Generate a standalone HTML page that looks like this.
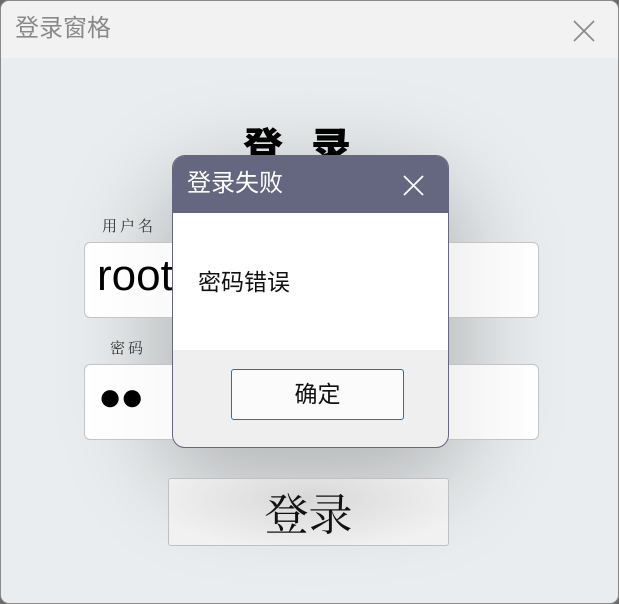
<!DOCTYPE html>
<html><head><meta charset="utf-8"><style>
*{margin:0;padding:0;box-sizing:border-box}
body{width:619px;height:604px;background:#6a6a6a;position:relative;overflow:hidden;font-family:"Liberation Sans","Noto Sans CJK SC",sans-serif}
.win{position:absolute;left:0;top:0;width:619px;height:604px;border:1px solid #8a8a8a;border-radius:9px;background:#eaedef;overflow:hidden}
.tb{position:absolute;left:0;top:0;width:100%;height:57px;background:#f2f2f2}
.tt{position:absolute;left:14px;top:13px;font-size:24px;line-height:30px;color:#8a8a8a}
.x{position:absolute}
.shadow{position:absolute;left:150px;top:170px;width:320px;height:320px;border-radius:80px;background:rgba(0,0,0,0.22);filter:blur(45px)}
.title{position:absolute;left:242px;top:114px;font-size:40px;font-weight:900;letter-spacing:28px;font-family:"Noto Sans CJK SC",sans-serif;color:#000}
.lbl{position:absolute;font-size:15px;color:#333;font-family:"Noto Serif CJK SC",serif;letter-spacing:3px}
.inp{position:absolute;left:83px;width:455px;height:76px;border:1.5px solid #c4c4c4;border-radius:6px;background:linear-gradient(90deg,#fff,#f4f4f4 40%,#e4e4e4 60%,#fff)}
.btn{position:absolute;left:167px;top:477px;width:281px;height:68px;border:1px solid #c0c0c0;border-radius:3px;background:radial-gradient(ellipse at 50% 30%,#d8d8d8,#f1f1f1 80%);font-family:"Noto Serif CJK SC",serif;font-size:44px;text-align:center;line-height:64px;color:#111}
.dlg{position:absolute;left:171px;top:154px;width:277px;height:293px;border:1.5px solid #65667f;border-radius:13px;overflow:hidden;background:#efefef}
.dh{height:57px;background:#65667f;color:#fff;font-size:24px;line-height:30px;padding:13px 0 0 14px}
.db{height:137px;background:#fff;font-size:23px;line-height:28px;padding:55px 0 0 25px;color:#111}
.ok{position:absolute;left:58px;top:213px;width:173px;height:51px;border:1.5px solid #0a78d7;border-radius:3px;background:#fbfbfb;text-align:center;line-height:48px;font-size:23px;color:#111}
</style></head><body>
<div class="win">
<div class="tb"><div class="tt">登录窗格</div>
<svg class="x" style="left:572px;top:19px" width="22" height="22"><path d="M1 1L21 21M21 1L1 21" stroke="#888" stroke-width="1.6"/></svg></div>
<div class="shadow"></div>
<div class="title">登录</div>
<div class="lbl" style="left:101px;top:214px">用户名</div>
<div class="inp" style="top:241px"><span style="position:absolute;left:12px;top:8px;font-size:44px;color:#000">root</span></div>
<div class="lbl" style="left:109px;top:336px">密码</div>
<div class="inp" style="top:363px"><span style="position:absolute;left:13px;top:10px;font-size:40px;color:#000;letter-spacing:-2px">●●</span></div>
<div class="btn">登录</div>
<div class="dlg">
<div class="dh">登录失败</div>
<svg class="x" style="left:230px;top:19px" width="22" height="22"><path d="M1 1L20 20M20 1L1 20" stroke="#fff" stroke-width="1.8"/></svg>
<div class="db">密码错误</div>
<div class="ok">确定</div>
</div>
</div>
</body></html>
